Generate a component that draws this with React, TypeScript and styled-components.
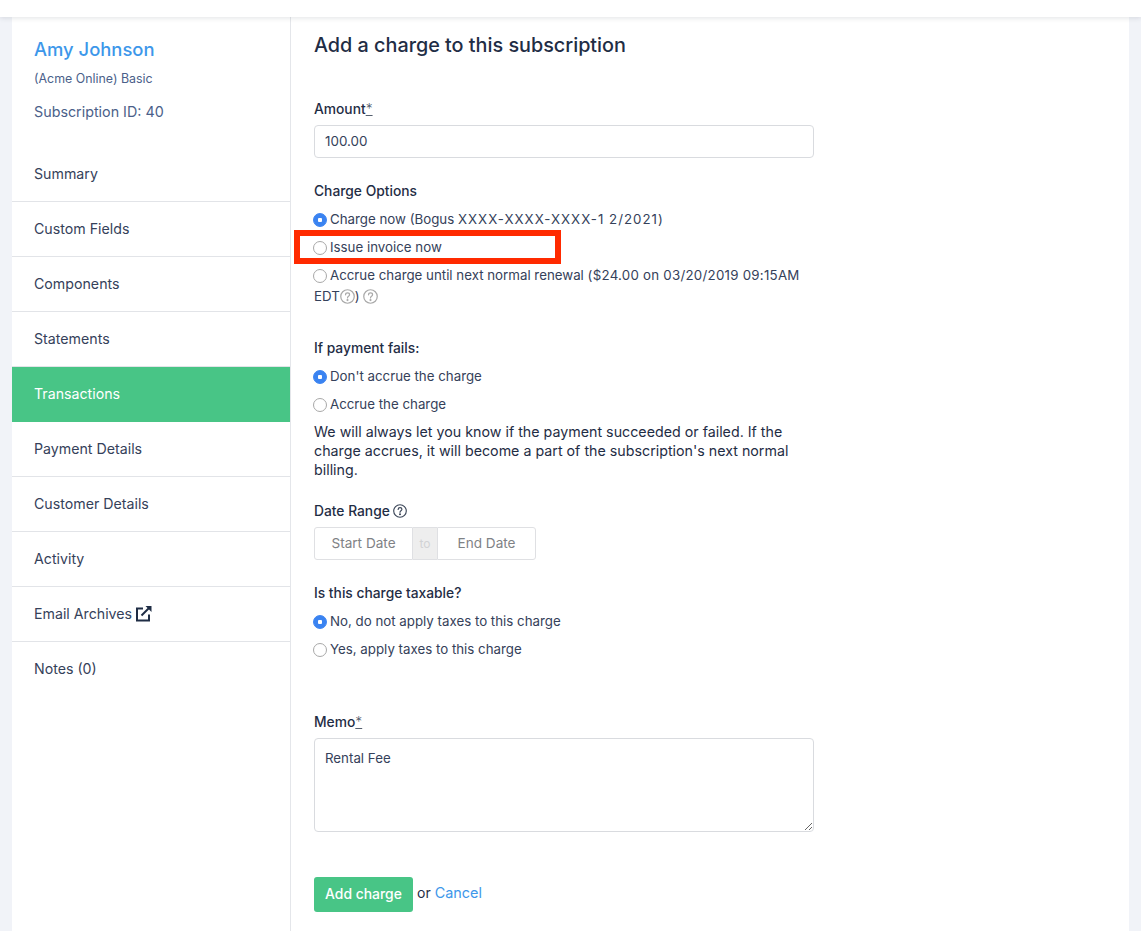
import styled, { createGlobalStyle } from "styled-components";

const navItems = [
  "Summary",
  "Custom Fields",
  "Components",
  "Statements",
  "Transactions",
  "Payment Details",
  "Customer Details",
  "Activity",
  "Email Archives",
  "Notes (0)",
];

const HelpIcon = ({ size = 14, color = "#a9a9a9" }: { size?: number; color?: string }) => (
  <HelpSvg width={size} height={size} viewBox="0 0 16 16" fill="none" stroke={color} strokeWidth="1.3">
    <circle cx="8" cy="8" r="7.2" />
    <path d="M5.9 6.2c0-1.2 1-2 2.2-2s2.1.8 2.1 1.9c0 1.7-2.2 1.7-2.2 3.4" strokeLinecap="round" />
    <circle cx="8" cy="11.8" r="0.5" fill={color} />
  </HelpSvg>
);

const ExternalIcon = () => (
  <ExternalSvg width="17" height="17" viewBox="0 0 17 17" fill="none" stroke="#1f2d45" strokeWidth="2">
    <path d="M8 3.5H2v12h12V9.5" />
    <path d="M6.5 10.5 14 3" />
    <path d="M10.5 1h6v6z" fill="#1f2d45" stroke="none" />
  </ExternalSvg>
);

const App = () => {
  return (
    <>
      <GlobalStyle />
      <TopBar />
      <Page>
        <Sidebar>
          <CustomerHead>
            <CustomerName>Amy Johnson</CustomerName>
            <PlanName>(Acme Online) Basic</PlanName>
            <SubscriptionId>Subscription ID: 40</SubscriptionId>
          </CustomerHead>
          <Nav>
            {navItems.map((item) => (
              <NavItem key={item} $active={item === "Transactions"}>
                <NavText>{item}</NavText>
                {item === "Email Archives" && <ExternalIcon />}
              </NavItem>
            ))}
          </Nav>
        </Sidebar>
        <Main>
          <Title>Add a charge to this subscription</Title>

          <AmountLabel>
            Amount<Required>*</Required>
          </AmountLabel>
          <TextInput defaultValue="100.00" />

          <ChargeLabel>Charge Options</ChargeLabel>
          <RadioRow>
            <Radio $checked />
            <span>
              Charge now (Bogus <Digits $spacing={1}>XXXX-XXXX-XXXX-1 2/2021</Digits>)
            </span>
          </RadioRow>
          <RadioRow>
            <Radio />
            Issue invoice now
            <Highlight />
          </RadioRow>
          <RadioBlock>
            <Radio />
            Accrue charge until next normal renewal <Digits $spacing={0.25}>($24.00 on 03/20/2019 09:15AM</Digits> EDT
            <HelpIcon size={15} />) <HelpIcon size={15} />
          </RadioBlock>

          <FailLabel>If payment fails:</FailLabel>
          <RadioRow>
            <Radio $checked />
            Don't accrue the charge
          </RadioRow>
          <RadioRow>
            <Radio />
            Accrue the charge
          </RadioRow>
          <Note>
            We will always let you know if the payment succeeded or failed. If the charge accrues, it will become a
            part of the subscription's next normal billing.
          </Note>

          <DateLabel>
            Date Range <HelpIcon size={14} color="#3b4658" />
          </DateLabel>
          <DateRange>
            <DateField $side="left">Start Date</DateField>
            <DateTo>to</DateTo>
            <DateField $side="right">End Date</DateField>
          </DateRange>

          <TaxLabel>Is this charge taxable?</TaxLabel>
          <RadioRow>
            <Radio $checked />
            No, do not apply taxes to this charge
          </RadioRow>
          <RadioRow>
            <Radio />
            Yes, apply taxes to this charge
          </RadioRow>

          <MemoLabel>
            Memo<Required>*</Required>
          </MemoLabel>
          <MemoInput defaultValue="Rental Fee" />

          <Actions>
            <SubmitButton>Add charge</SubmitButton>
            <OrText>or</OrText>
            <CancelLink>Cancel</CancelLink>
          </Actions>
        </Main>
      </Page>
    </>
  );
};

export default App;

const GlobalStyle = createGlobalStyle`
  html, body {
    margin: 0;
    height: 931px;
    overflow: hidden;
    background: #f1f3f8;
    font-family: "Inter", "Liberation Sans", sans-serif;
    color: #1f2d45;
  }
  * {
    box-sizing: border-box;
  }
`;

const TopBar = styled.div`
  height: 17px;
  background: #fff;
  box-shadow: 0 1px 5px rgba(40, 50, 70, 0.14);
  position: relative;
`;

const Page = styled.div`
  display: flex;
  height: 914px;
  margin: 0 12px;
  background: #fff;
`;

const Sidebar = styled.div`
  width: 279px;
  flex-shrink: 0;
  border-right: 1px solid #e4e6ea;
`;

const CustomerHead = styled.div`
  padding: 20px 22px 0;
  height: 130px;
`;

const CustomerName = styled.div`
  font-size: 18.4px;
  line-height: 24px;
  font-weight: 500;
  color: #3d97ea;
`;

const PlanName = styled.div`
  margin-top: 8px;
  font-size: 12.4px;
  line-height: 20px;
  color: #4b5f8a;
`;

const SubscriptionId = styled.div`
  margin-top: 13px;
  font-size: 14.3px;
  line-height: 20px;
  color: #4b5f8a;
`;

const Nav = styled.div`
  display: flex;
  flex-direction: column;
`;

const NavItem = styled.div<{ $active?: boolean }>`
  display: flex;
  align-items: center;
  gap: 3px;
  height: 55px;
  padding: 0 22px 2px;
  font-size: 14.2px;
  color: ${(props) => (props.$active ? "#fff" : "#35415a")};
  background: ${(props) => (props.$active ? "#48c586" : "transparent")};
  border-bottom: 1px solid ${(props) => (props.$active ? "#48c586" : "#e2e4e8")};

  &:last-child {
    border-bottom: none;
  }
`;

const NavText = styled.span`
  white-space: nowrap;
`;

const ExternalSvg = styled.svg`
  display: block;
`;

const Main = styled.div`
  flex: 1;
  padding: 16px 0 0 23px;
`;

const Title = styled.div`
  font-size: 19.8px;
  line-height: 24px;
  font-weight: 500;
  color: #1f2d45;
`;

const FieldLabel = styled.div`
  font-size: 13.8px;
  line-height: 20px;
  font-weight: 500;
  color: #1f2d45;
  display: flex;
  align-items: center;
`;

const AmountLabel = styled(FieldLabel)`
  margin-top: 42px;
  margin-bottom: 6px;
`;

const ChargeLabel = styled(FieldLabel)`
  margin-top: 23px;
  margin-bottom: 4px;
`;

const FailLabel = styled(FieldLabel)`
  margin-top: 31px;
  margin-bottom: 4px;
`;

const DateLabel = styled(FieldLabel)`
  margin-top: 22px;
  margin-bottom: 6px;
  gap: 3px;
`;

const TaxLabel = styled(FieldLabel)`
  margin-top: 23px;
  margin-bottom: 4px;
`;

const MemoLabel = styled(FieldLabel)`
  margin-top: 49px;
  margin-bottom: 6px;
`;

const Required = styled.span`
  text-decoration: underline;
  font-weight: 300;
  color: #55606f;
`;

const TextInput = styled.input`
  display: block;
  width: 500px;
  height: 33px;
  padding: 0 10px 1px;
  border: 1px solid #d9dbdf;
  border-radius: 4px;
  font: inherit;
  font-size: 13.4px;
  color: #35415a;
  outline: none;
`;

const RadioRow = styled.div`
  position: relative;
  display: flex;
  align-items: center;
  width: 500px;
  height: 28px;
  font-size: 13.3px;
  color: #35415a;
`;

const RadioBlock = styled.div`
  width: 500px;
  padding-top: 4px;
  font-size: 13.3px;
  line-height: 21px;
  color: #35415a;
`;

const Digits = styled.span<{ $spacing: number }>`
  letter-spacing: ${(props) => props.$spacing}px;
`;

const Radio = styled.span<{ $checked?: boolean }>`
  display: inline-block;
  flex-shrink: 0;
  width: 14px;
  height: 14px;
  margin: 1px 3px 0 -1px;
  border-radius: 50%;
  vertical-align: -3px;
  background: ${(props) => (props.$checked ? "radial-gradient(circle, #fff 0 2px, #3a83f1 2.5px)" : "#fff")};
  border: 1px solid ${(props) => (props.$checked ? "#3a83f1" : "#a8a8a8")};
`;

const Highlight = styled.div`
  position: absolute;
  left: -20px;
  top: -3px;
  width: 267px;
  height: 34px;
  border: 6px solid #ff2a00;
`;

const HelpSvg = styled.svg`
  display: inline-block;
  vertical-align: -3px;
`;

const Note = styled.div`
  width: 500px;
  margin-top: 4px;
  font-size: 14.25px;
  line-height: 19px;
  color: #1f2d45;
`;

const DateRange = styled.div`
  display: flex;
  width: 222px;
  height: 33px;
`;

const DateField = styled.div<{ $side: "left" | "right" }>`
  flex: 1;
  display: flex;
  align-items: center;
  justify-content: center;
  padding-bottom: 1px;
  font-size: 13.6px;
  color: #7f8286;
  border: 1px solid #dfe0e3;
  border-radius: ${(props) => (props.$side === "left" ? "3px 0 0 3px" : "0 3px 3px 0")};
`;

const DateTo = styled.div`
  width: 24px;
  flex-shrink: 0;
  display: flex;
  align-items: center;
  justify-content: center;
  font-size: 12px;
  color: #d2d3d5;
  background: #eeeeee;
  border-top: 1px solid #dfe0e3;
  border-bottom: 1px solid #dfe0e3;
`;

const MemoInput = styled.textarea`
  display: block;
  width: 500px;
  height: 94px;
  padding: 9px 10px;
  border: 1px solid #d9dbdf;
  border-radius: 4px;
  font: inherit;
  font-size: 13.3px;
  line-height: 20px;
  color: #35415a;
  outline: none;
`;

const Actions = styled.div`
  display: flex;
  align-items: center;
  margin-top: 45px;
`;

const SubmitButton = styled.button`
  width: 99px;
  height: 35px;
  padding: 0 0 2px;
  border: none;
  border-radius: 3px;
  background: #48c586;
  color: #fff;
  font: inherit;
  font-size: 13.9px;
  font-weight: 500;
`;

const OrText = styled.span`
  margin: 0 0 5px 4px;
  font-size: 14px;
  color: #1f2d45;
`;

const CancelLink = styled.a`
  margin: 0 0 5px 4px;
  font-size: 14.4px;
  color: #3d97ea;
`;
